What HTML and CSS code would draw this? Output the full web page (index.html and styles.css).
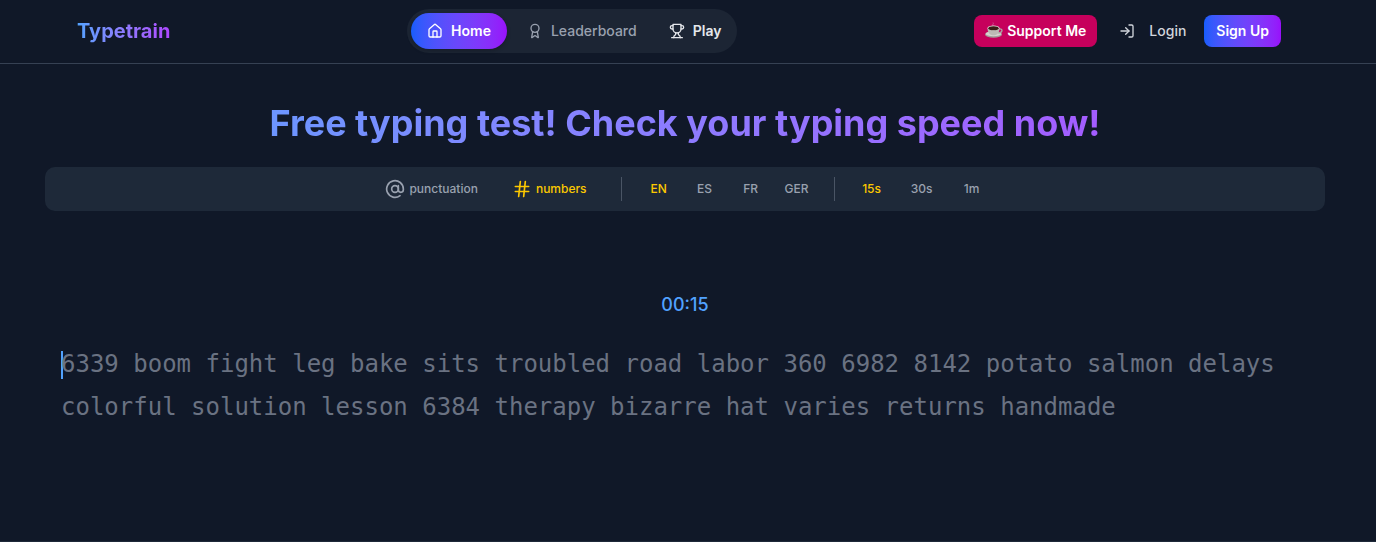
FILE: index.html
```html
<!DOCTYPE html>
<html lang="en">
<head>
    <meta charset="UTF-8">
    <meta name="viewport" content="width=device-width, initial-scale=1.0">
    <title>Typetrain</title>
    <link rel="stylesheet" href="styles.css">
</head>
<body>
    <header class="header">
        <div class="header-inner">
            <a href="#" class="logo">Typetrain</a>

            <nav class="nav">
                <a href="#" class="nav-link active">
                    <svg class="icon" viewBox="0 0 24 24"><path d="M15 21v-8a1 1 0 0 0-1-1h-4a1 1 0 0 0-1 1v8"/><path d="M3 10a2 2 0 0 1 .709-1.528l7-5.999a2 2 0 0 1 2.582 0l7 5.999A2 2 0 0 1 21 10v9a2 2 0 0 1-2 2H5a2 2 0 0 1-2-2z"/></svg>
                    Home
                </a>
                <a href="#" class="nav-link muted">
                    <svg class="icon" viewBox="0 0 24 24"><path d="m15.477 12.89 1.515 8.526a.5.5 0 0 1-.81.47l-3.58-2.687a1 1 0 0 0-1.197 0l-3.586 2.686a.5.5 0 0 1-.81-.469l1.514-8.526"/><circle cx="12" cy="8" r="6"/></svg>
                    Leaderboard
                </a>
                <a href="#" class="nav-link">
                    <svg class="icon" viewBox="0 0 24 24"><path d="M6 9H4.500a2.500 2.500 0 0 1 0-5H6"/><path d="M18 9h1.500a2.500 2.500 0 0 0 0-5H18"/><path d="M4 22h16"/><path d="M10 14.660V17c0 .550-.470.980-.970 1.210C7.850 18.750 7 20.240 7 22"/><path d="M14 14.660V17c0 .550.470.980.970 1.210C16.150 18.750 17 20.240 17 22"/><path d="M18 2H6v7a6 6 0 0 0 12 0V2Z"/></svg>
                    Play
                </a>
            </nav>

            <div class="actions">
                <a href="#" class="btn support">
                    <svg class="cup" viewBox="0 0 18 18">
                        <ellipse cx="8.500" cy="12.500" rx="8.500" ry="3.200" fill="#a39d9b"/>
                        <ellipse cx="8.500" cy="11.800" rx="7.800" ry="2.500" fill="#d6d2d0"/>
                        <path d="M14 7c4-.8 4.300 3.800-1.300 3.900" fill="none" stroke="#aaa5a3" stroke-width="1.400"/>
                        <path d="M2.500 6c0 4.500 2.200 7.300 6 7.300s6-2.800 6-7.300z" fill="#bdb8b5"/>
                        <ellipse cx="8.500" cy="6" rx="6" ry="2.600" fill="#ebe8e6"/>
                        <ellipse cx="8.500" cy="6.200" rx="5.200" ry="2" fill="#3b1d16"/>
                        <path d="M8 4c-1.500-1.500 1.300-1.800 0-3.500" fill="none" stroke="#d9b9c6" stroke-opacity=".4"/>
                    </svg>
                    Support Me
                </a>
                <a href="#" class="btn login">
                    <svg class="icon" viewBox="0 0 24 24"><path d="M15 3h4a2 2 0 0 1 2 2v14a2 2 0 0 1-2 2h-4"/><path d="m10 17 5-5-5-5"/><path d="M15 12H3"/></svg>
                    Login
                </a>
                <a href="#" class="btn signup">Sign Up</a>
            </div>
        </div>
    </header>

    <main class="main">
        <h1 class="title">Free typing test! Check your typing speed now!</h1>

        <div class="options">
            <div class="group toggles">
                <button type="button" class="option">
                    <svg class="option-icon" viewBox="0 0 24 24"><circle cx="12" cy="12" r="4"/><path d="M16 8v5a3 3 0 0 0 6 0v-1a10 10 0 1 0-4 8"/></svg>
                    punctuation
                </button>
                <button type="button" class="option selected">
                    <svg class="option-icon" viewBox="0 0 24 24"><path d="M4 9h16M4 15h16M10 3 8 21M16 3l-2 18"/></svg>
                    numbers
                </button>
            </div>
            <div class="group languages">
                <button type="button" class="option selected">EN</button>
                <button type="button" class="option">ES</button>
                <button type="button" class="option">FR</button>
                <button type="button" class="option">GER</button>
            </div>
            <div class="group times">
                <button type="button" class="option selected">15s</button>
                <button type="button" class="option">30s</button>
                <button type="button" class="option">1m</button>
            </div>
        </div>

        <div class="timer">00:15</div>

        <p class="words"><span class="caret"></span>6339 boom fight leg bake sits troubled road labor 360 6982 8142 potato salmon delays colorful solution lesson 6384 therapy bizarre hat varies returns handmade</p>
    </main>

    <footer class="footer"></footer>
</body>
</html>
```
FILE: styles.css
```css
* {
    box-sizing: border-box;
}

body {
    margin: 0;
    min-height: 100vh;
    display: flex;
    flex-direction: column;
    background: #101828;
    color: #e5e7eb;
    font-family: Inter, sans-serif;
    font-size: 14px;
    line-height: 20px;
}

a {
    color: inherit;
    text-decoration: none;
}

button {
    font: inherit;
    color: inherit;
    background: none;
    border: 0;
    cursor: pointer;
}

.header {
    padding-right: 6px;
    border-bottom: 1px solid #364153;
}

.header-inner {
    max-width: 1280px;
    margin: 0 auto;
    padding: 9px 44px 10px 32px;
    display: flex;
    justify-content: space-between;
    align-items: center;
}

.logo {
    font-size: 20px;
    font-weight: 700;
    line-height: 28px;
    background: linear-gradient(to right in oklab, #51a2ff, #ad46ff);
    background-clip: text;
    color: transparent;
}

.icon {
    width: 16px;
    height: 16px;
    flex: none;
    fill: none;
    stroke: currentColor;
    stroke-width: 2;
    stroke-linecap: round;
    stroke-linejoin: round;
}

.nav {
    display: flex;
    padding: 4px 0 4px 4px;
    background: #1c2534;
    border-radius: 22px;
}

.nav-link {
    display: flex;
    align-items: center;
    gap: 8px;
    padding: 8px 16px;
    border-radius: 18px;
    font-weight: 600;
}

.nav-link.active {
    margin-right: 4px;
    color: #fff;
    background: linear-gradient(to right in oklab, #155dfc, #9810fa);
    box-shadow: 0 2px 4px rgba(0, 0, 0, 0.2);
}

.nav-link.muted {
    color: #99a1af;
    font-weight: 500;
}

.actions {
    display: flex;
    align-items: center;
}

.btn {
    display: flex;
    align-items: center;
    padding: 6px 12px;
    border-radius: 8px;
    font-weight: 600;
}

.support {
    gap: 4px;
    margin-right: 10px;
    padding: 6px 11px;
    color: #fff;
    background: #c6005c;
}

.cup {
    width: 18px;
    height: 18px;
    flex: none;
}

.login {
    gap: 14px;
    margin-right: 6px;
    color: #d1d5dc;
    font-weight: 500;
}

.signup {
    color: #fff;
    background: linear-gradient(to right in oklab, #155dfc, #9810fa);
}

.main {
    flex: 1;
    padding-right: 6px;
}

.title {
    max-width: 1280px;
    margin: 39px auto 24px;
    font-size: 36px;
    font-weight: 700;
    line-height: 40px;
    text-align: center;
    background: linear-gradient(to right in oklab, #51a2ff, #ad46ff);
    background-clip: text;
    color: transparent;
}

.options {
    max-width: 1280px;
    height: 44px;
    margin: 0 auto;
    display: flex;
    justify-content: center;
    align-items: center;
    background: #1e2939;
    border-radius: 10px;
    color: #99a1af;
    font-size: 12px;
    line-height: 16px;
}

.group {
    display: flex;
    align-items: center;
    height: 24px;
}

.group + .group {
    border-left: 1px solid #4a5565;
}

.option {
    display: flex;
    justify-content: center;
    align-items: center;
    gap: 4px;
    min-width: 26px;
    padding: 0;
    font-weight: 500;
}

.option.selected {
    color: #fcc800;
}

.option-icon {
    width: 20px;
    height: 20px;
    flex: none;
    fill: none;
    stroke: currentColor;
    stroke-width: 2;
    stroke-linecap: round;
    stroke-linejoin: round;
}

.toggles {
    gap: 34px;
    padding-right: 34px;
}

.languages {
    gap: 20px;
    padding: 0 24px;
}

.times {
    gap: 24px;
    padding-left: 24px;
}

.timer {
    margin-top: 80px;
    text-align: center;
    color: #51a2ff;
    font-size: 18px;
    font-weight: 500;
    line-height: 28px;
}

.words {
    max-width: 1280px;
    margin: 24px auto 0;
    padding: 0 16px;
    color: #6a7282;
    font-family: "DejaVu Sans Mono", monospace;
    font-size: 24px;
    line-height: 43px;
}

.caret {
    display: inline-block;
    width: 2px;
    height: 28px;
    margin-right: -2px;
    vertical-align: middle;
    background: #51a2ff;
}

.footer {
    border-top: 1px solid #1e2939;
}
```
